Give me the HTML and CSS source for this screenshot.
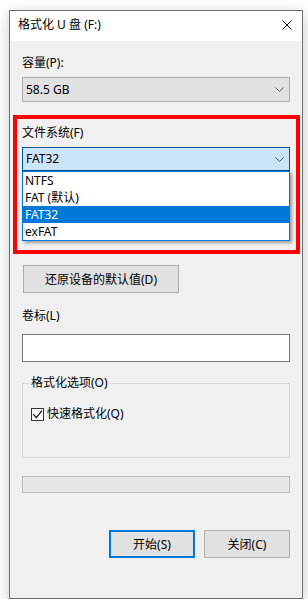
FILE: index.html
```html
<!DOCTYPE html>
<html lang="zh-CN">
<head>
  <meta charset="UTF-8" />
  <title>格式化 U 盘 (F:)</title>
  <link rel="stylesheet" href="styles.css">
</head>
<body>

  <div class="window">
    <div class="titlebar">
      <span class="title">格式化 U 盘 (F:)</span>
      <svg class="close" width="10" height="10" viewBox="0 0 10 10">
        <path d="M0.5 0.5 L9.5 9.5 M9.5 0.5 L0.5 9.5" stroke="#000" stroke-width="1" fill="none"/>
      </svg>
    </div>

    <div class="content">
      <div class="label first">容量(P):</div>
      <div class="combo">
        <span>58.5 GB</span>
        <svg class="chevron" width="9" height="5" viewBox="0 0 9 5">
          <polyline points="0.5,0.5 4.5,4.5 8.5,0.5" stroke="#606060" fill="none"/>
        </svg>
      </div>

      <div class="fs">
        <div class="label">文件系统(F)</div>
        <div class="combo open">
          <span>FAT32</span>
          <svg class="chevron" width="9" height="5" viewBox="0 0 9 5">
            <polyline points="0.5,0.5 4.5,4.5 8.5,0.5" stroke="#505050" fill="none"/>
          </svg>
        </div>
        <ul class="dropdown">
          <li>NTFS</li>
          <li>FAT (默认)</li>
          <li class="selected">FAT32</li>
          <li>exFAT</li>
        </ul>
        <div class="highlight"></div>
      </div>

      <button class="btn reset">还原设备的默认值(D)</button>

      <div class="label volume">卷标(L)</div>
      <div class="textbox"></div>

      <fieldset class="group">
        <legend>格式化选项(O)</legend>
        <div class="check-row">
          <span class="checkbox">
            <svg width="11" height="11" viewBox="0 0 11 11">
              <polyline points="1.2,5.2 4.3,8.6 10,1.6" stroke="#000" stroke-width="1.1" fill="none"/>
            </svg>
          </span>
          <span>快速格式化(Q)</span>
        </div>
      </fieldset>

      <div class="progress"></div>

      <div class="actions">
        <button class="btn default">开始(S)</button>
        <button class="btn">关闭(C)</button>
      </div>
    </div>
  </div>

</body>
</html>
```

FILE: styles.css
```css
body {
  margin: 0;
  background: #fff;
  font-family: "Noto Sans", "Noto Sans CJK SC", sans-serif;
  font-size: 12px;
  color: #000;
}
.window {
  box-sizing: border-box;
  width: 294px;
  height: 589px;
  margin: 10px 0 0 9px;
  border: 1px solid #6e6e6e;
  background: #f0f0f0;
  box-shadow: 0 4px 14px rgba(0, 0, 0, 0.22);
}
.titlebar {
  height: 30px;
  background: #fff;
  display: flex;
  align-items: center;
  justify-content: space-between;
  padding: 0 10px 2px 8px;
  box-sizing: border-box;
}
.title {
  line-height: 16px;
}
.content {
  padding: 0 12px;
}
.label {
  line-height: 16px;
  margin-top: 23px;
}
.label.first {
  margin-top: 14px;
}
.combo {
  box-sizing: border-box;
  height: 25px;
  margin-top: 6px;
  border: 1px solid #adadad;
  background: #e1e1e1;
  display: flex;
  align-items: center;
  justify-content: space-between;
  padding: 0 5px 0 3px;
  line-height: 16px;
}
.combo.open {
  height: 24px;
  border-color: #005499;
  background: #cce4f7;
}
.fs {
  position: relative;
}
.fs .highlight {
  position: absolute;
  left: -9px;
  right: -10px;
  top: -10px;
  bottom: -83px;
  border: 4px solid #ff0000;
  pointer-events: none;
}
.dropdown {
  position: absolute;
  left: 0;
  right: 0;
  top: 46px;
  margin: 0;
  padding: 0;
  list-style: none;
  background: #fff;
  border: 1px solid #0078d7;
  box-shadow: 2px 2px 3px rgba(0, 0, 0, 0.35);
  z-index: 2;
}
.dropdown li {
  height: 17px;
  line-height: 17px;
  padding-left: 2px;
}
.dropdown li.selected {
  background: #0078d7;
  color: #fff;
}
.btn {
  box-sizing: border-box;
  height: 28px;
  border: 1px solid #adadad;
  background: #e1e1e1;
  font-family: inherit;
  font-size: 12px;
  color: #000;
  padding: 0;
}
.btn.reset {
  display: block;
  width: 156px;
  margin: 94px 0 0 1px;
}
.label.volume {
  margin-top: 15px;
}
.textbox {
  box-sizing: border-box;
  height: 28px;
  margin-top: 10px;
  border: 1px solid #7a7a7a;
  background: #fff;
}
.group {
  margin: 13px 0 0;
  padding: 15px 8px 35px;
  border: 1px solid #dcdcdc;
  min-width: 0;
}
.group legend {
  padding: 0 2px;
  margin-left: -2px;
  line-height: 16px;
}
.check-row {
  display: flex;
  align-items: center;
  gap: 3px;
  line-height: 16px;
}
.checkbox {
  box-sizing: border-box;
  width: 13px;
  height: 13px;
  border: 1px solid #333;
  background: #fff;
  display: flex;
}
.progress {
  box-sizing: border-box;
  height: 17px;
  margin-top: 18px;
  border: 1px solid #bcbcbc;
  background: #e6e6e6;
}
.actions {
  display: flex;
  justify-content: flex-end;
  gap: 9px;
  margin-top: 37px;
}
.actions .btn {
  width: 86px;
}
.btn.default {
  border: 2px solid #0078d7;
}
```
